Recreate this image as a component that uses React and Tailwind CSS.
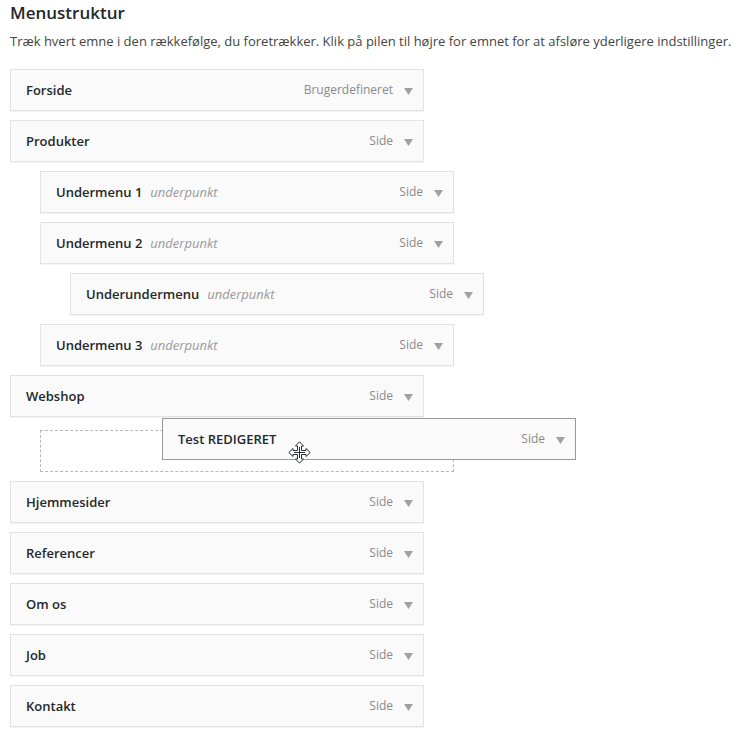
import React from 'react';

const items = [
  { title: 'Forside', type: 'Brugerdefineret', depth: 0 },
  { title: 'Produkter', type: 'Side', depth: 0 },
  { title: 'Undermenu 1', sub: 'underpunkt', type: 'Side', depth: 1 },
  { title: 'Undermenu 2', sub: 'underpunkt', type: 'Side', depth: 1 },
  { title: 'Underundermenu', sub: 'underpunkt', type: 'Side', depth: 2 },
  { title: 'Undermenu 3', sub: 'underpunkt', type: 'Side', depth: 1 },
  { title: 'Webshop', type: 'Side', depth: 0 },
  { placeholder: true },
  { title: 'Hjemmesider', type: 'Side', depth: 0 },
  { title: 'Referencer', type: 'Side', depth: 0 },
  { title: 'Om os', type: 'Side', depth: 0 },
  { title: 'Job', type: 'Side', depth: 0 },
  { title: 'Kontakt', type: 'Side', depth: 0 },
];

const depthClass = ['ml-0', 'ml-[30px]', 'ml-[60px]'];

function Row({ item, className }) {
  return (
    <div className={`flex h-[42px] w-[414px] items-center border bg-[#fafafa] pl-[15px] pr-[10px] ${className}`}>
      <span className="translate-y-px text-[13px] font-semibold text-[#23282d]">{item.title}</span>
      {item.sub && <span className="ml-2 translate-y-px text-[13px] italic text-[#999]">{item.sub}</span>}
      <span className="ml-auto text-xs text-[#8a8a8a]">{item.type}</span>
      <svg className="ml-[11px] translate-y-px" width="9" height="7" viewBox="0 0 9 7">
        <path d="M0 0h9L4.5 7z" fill="#a0a0a0" />
      </svg>
    </div>
  );
}

export default function App() {
  return (
    <div className="relative h-[744px] w-[744px] overflow-hidden bg-white pl-[10px] pt-[1px] font-['Open_Sans',sans-serif]">
      <h2 className="text-[17px] leading-[23px] font-semibold text-[#23282d]">Menustruktur</h2>
      <p className="mt-[8px] text-[13px] leading-[18px] whitespace-nowrap text-[#444]">
        Træk hvert emne i den rækkefølge, du foretrækker. Klik på pilen til højre for emnet for at afsløre yderligere indstillinger.
      </p>

      <div className="mt-[19px] flex flex-col gap-[9px]">
        {items.map((item, i) =>
          item.placeholder ? (
            <div key={i} className="ml-[30px] mt-[4px] h-[42px] w-[414px] border border-dashed border-[#b4b9be]" />
          ) : (
            <Row key={i} item={item} className={`border-[#e2e2e2] shadow-[0_1px_1px_rgba(0,0,0,0.04)] ${depthClass[item.depth]}`} />
          )
        )}
      </div>

      {/* item being dragged */}
      <div className="absolute left-[162px] top-[418px]">
        <Row item={{ title: 'Test REDIGERET', type: 'Side' }} className="border-[#999]" />
      </div>

      {/* move cursor */}
      <svg className="absolute left-[288px] top-[441px]" width="23" height="23" viewBox="0 0 23 23">
        <path
          d="M11.5 .8 15.5 5H13.5V9.5H18V7.5L22.2 11.5 18 15.5V13.5H13.5V18H15.5L11.5 22.2 7.5 18H9.5V13.5H5V15.5L.8 11.5 5 7.5V9.5H9.5V5H7.5Z"
          fill="#fff"
          stroke="#2b2f36"
          strokeWidth="1"
          strokeLinejoin="round"
        />
        <path d="M11.5 6V17M6 11.5H17" stroke="#2b2f36" strokeWidth="1" fill="none" />
      </svg>
    </div>
  );
}
